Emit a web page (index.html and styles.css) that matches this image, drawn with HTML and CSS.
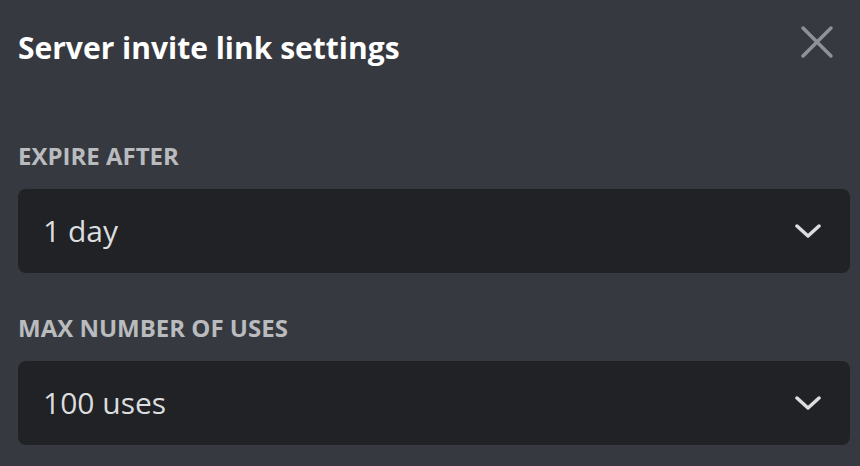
FILE: index.html
```html
<!DOCTYPE html>
<html lang="en">
<head>
  <meta charset="UTF-8" />
  <meta name="viewport" content="width=device-width, initial-scale=1.0" />
  <title>Server invite link settings</title>
  <link rel="stylesheet" href="styles.css">
</head>
<body>
  <div class="modal">
    <div class="modal-header">
      <h2 class="modal-title">Server invite link settings</h2>
      <button class="close-btn" aria-label="Close">
        <svg width="34" height="34" viewBox="0 0 34 34">
          <path d="M3 3 L31 31 M31 3 L3 31" stroke="currentColor" stroke-width="3.5" stroke-linecap="round" fill="none"/>
        </svg>
      </button>
    </div>

    <div class="field">
      <label class="field-label">Expire After</label>
      <div class="select">
        <span class="select-value">1 day</span>
        <svg class="chevron" width="26" height="16" viewBox="0 0 26 16">
          <path d="M2 3 L13 13 L24 3" stroke="currentColor" stroke-width="3.5" stroke-linecap="round" stroke-linejoin="round" fill="none"/>
        </svg>
      </div>
    </div>

    <div class="field">
      <label class="field-label">Max Number of Uses</label>
      <div class="select">
        <span class="select-value">100 uses</span>
        <svg class="chevron" width="26" height="16" viewBox="0 0 26 16">
          <path d="M2 3 L13 13 L24 3" stroke="currentColor" stroke-width="3.5" stroke-linecap="round" stroke-linejoin="round" fill="none"/>
        </svg>
      </div>
    </div>
  </div>
</body>
</html>
```

FILE: styles.css
```css
body {
  margin: 0;
  background: #36393f;
  font-family: "Open Sans", "Noto Sans", sans-serif;
  color: #dcddde;
  height: 466px;
  overflow: hidden;
}
.modal {
  padding: 28px 10px 0 18px;
}
.modal-header {
  position: relative;
  margin-bottom: 73px;
}
.modal-title {
  margin: 0;
  font-size: 30px;
  line-height: 40px;
  font-weight: 700;
  color: #fff;
}
.close-btn {
  position: absolute;
  top: -3px;
  right: 16px;
  background: none;
  border: none;
  padding: 0;
  color: #8e9297;
  cursor: pointer;
  display: flex;
}
.field {
  margin-bottom: 40px;
}
.field-label {
  display: block;
  font-size: 24px;
  line-height: 30px;
  font-weight: 700;
  text-transform: uppercase;
  color: #b9bbbe;
  margin-bottom: 18px;
}
.select {
  display: flex;
  align-items: center;
  justify-content: space-between;
  height: 84px;
  padding: 0 29px 0 25px;
  background: #202225;
  border-radius: 8px;
}
.select-value {
  font-size: 30px;
  line-height: 40px;
  font-weight: 500;
}
.chevron {
  color: #dcddde;
}
```
